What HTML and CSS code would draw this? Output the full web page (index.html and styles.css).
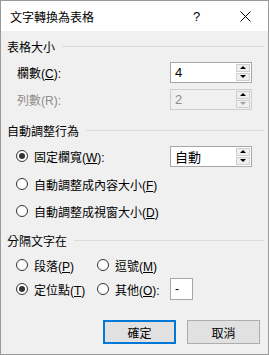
FILE: index.html
```
<!DOCTYPE html>
<html lang="zh-Hant">
<head>
    <meta charset="UTF-8">
    <meta name="viewport" content="width=device-width, initial-scale=1.0">
    <title>文字轉換為表格</title>
    <link rel="stylesheet" href="styles.css">
</head>
<body>
    <div class="dialog">
        <div class="titlebar">
            <span class="title">文字轉換為表格</span>
            <span class="help">?</span>
            <span class="close">
                <svg width="11" height="11" viewBox="0 0 11 11">
                    <path d="M0.5 0.5 L10.5 10.5 M10.5 0.5 L0.5 10.5" stroke="#000" stroke-width="1" fill="none"/>
                </svg>
            </span>
        </div>

        <div class="body">
            <div class="group-head mt5"><span>表格大小</span><span class="line"></span></div>

            <div class="field mt3">
                <label>欄數(<u>C</u>):</label>
                <div class="spin">
                    <span class="value">4</span>
                    <div class="spin-btns">
                        <span class="up"></span>
                        <span class="down"></span>
                    </div>
                </div>
            </div>

            <div class="field mt1 disabled">
                <label>列數(R):</label>
                <div class="spin">
                    <span class="value">2</span>
                    <div class="spin-btns">
                        <span class="up"></span>
                        <span class="down"></span>
                    </div>
                </div>
            </div>

            <div class="group-head mt8"><span>自動調整行為</span><span class="line"></span></div>

            <div class="field radio-field mt3">
                <label class="radio checked"><span class="dot"></span><span>固定欄寬(<u>W</u>):</span></label>
                <div class="spin">
                    <span class="value">自動</span>
                    <div class="spin-btns">
                        <span class="up"></span>
                        <span class="down"></span>
                    </div>
                </div>
            </div>

            <div class="radio-row mt2">
                <label class="radio"><span class="dot"></span><span>自動調整成內容大小(<u>F</u>)</span></label>
            </div>
            <div class="radio-row mt1">
                <label class="radio"><span class="dot"></span><span>自動調整成視窗大小(<u>D</u>)</span></label>
            </div>

            <div class="group-head mt6"><span>分隔文字在</span><span class="line"></span></div>

            <div class="sep-grid mt2">
                <label class="radio"><span class="dot"></span><span>段落(<u>P</u>)</span></label>
                <label class="radio"><span class="dot"></span><span>逗號(<u>M</u>)</span></label>
                <span></span>
            </div>
            <div class="sep-grid short">
                <label class="radio checked"><span class="dot"></span><span>定位點(<u>T</u>)</span></label>
                <label class="radio"><span class="dot"></span><span>其他(<u>O</u>):</span></label>
                <div class="other-box">-</div>
            </div>

            <div class="buttons">
                <button class="btn default">確定</button>
                <button class="btn">取消</button>
            </div>
        </div>
    </div>
</body>
</html>
```

FILE: styles.css
```
body {
    margin: 0;
    padding: 0;
    font-family: "Liberation Sans", "Noto Sans CJK TC", sans-serif;
    font-size: 12px;
    color: #000;
    background-color: #fff;
}

.dialog {
    width: 269px;
    height: 355px;
    box-sizing: border-box;
    border: 1px solid #9a9a9a;
    background-color: #f0f0f0;
    display: flex;
    flex-direction: column;
}

.titlebar {
    height: 30px;
    background-color: #fff;
    display: flex;
    align-items: center;
    padding-left: 9px;
    flex-shrink: 0;
}

.title {
    flex: 1;
    font-size: 12px;
}

.help {
    width: 12px;
    margin-right: 35px;
    font-size: 13px;
}

.close {
    display: flex;
    margin-right: 17px;
}

.body {
    padding: 0 4px 0 6px;
    display: flex;
    flex-direction: column;
}

.mt1 { margin-top: 1px; }
.mt2 { margin-top: 2px; }
.mt3 { margin-top: 3px; }
.mt5 { margin-top: 5px; }
.mt6 { margin-top: 6px; }
.mt8 { margin-top: 8px; }

.group-head {
    height: 20px;
    display: flex;
    align-items: center;
    gap: 7px;
}

.group-head .line {
    flex: 1;
    height: 1px;
    background-color: #dcdcdc;
}

.field {
    height: 26px;
    display: flex;
    align-items: center;
    justify-content: space-between;
    padding: 0 12px 0 10px;
}

.radio-field {
    padding-left: 9px;
}

.field.disabled label,
.field.disabled .value {
    color: #8d8d8d;
}

.spin {
    width: 82px;
    height: 21px;
    box-sizing: border-box;
    border: 1px solid #a6a6a6;
    background-color: #fff;
    display: flex;
    align-items: stretch;
}

.field.disabled .spin {
    background-color: #f0f0f0;
    border-color: #cfcfcf;
}

.spin .value {
    flex: 1;
    padding-left: 4px;
    display: flex;
    align-items: center;
    font-size: 13px;
}

.spin-btns {
    width: 14px;
    margin: 1px;
    display: flex;
    flex-direction: column;
    gap: 1px;
}

.spin-btns span {
    flex: 1;
    box-sizing: border-box;
    border: 1px solid #cfcfcf;
    background-color: #efefef;
    display: flex;
    align-items: center;
    justify-content: center;
}

.spin-btns .up::before {
    content: "";
    border-left: 3px solid transparent;
    border-right: 3px solid transparent;
    border-bottom: 3px solid #000;
}

.spin-btns .down::before {
    content: "";
    border-left: 3px solid transparent;
    border-right: 3px solid transparent;
    border-top: 3px solid #000;
}

.field.disabled .spin-btns .down::before {
    border-top-color: #a0a0a0;
}

.radio {
    display: flex;
    align-items: center;
    gap: 6px;
    white-space: nowrap;
}

.radio .dot {
    width: 12px;
    height: 12px;
    box-sizing: border-box;
    border: 1px solid #333;
    border-radius: 50%;
    background-color: #fff;
    display: flex;
    align-items: center;
    justify-content: center;
}

.radio.checked .dot::after {
    content: "";
    width: 6px;
    height: 6px;
    border-radius: 50%;
    background-color: #333;
}

.radio-row {
    height: 26px;
    display: flex;
    align-items: center;
    padding-left: 9px;
}

.sep-grid {
    height: 26px;
    display: grid;
    grid-template-columns: 81px 73px auto;
    align-items: center;
    padding-left: 9px;
}

.sep-grid.short {
    height: 22px;
}

.other-box {
    width: 23px;
    height: 22px;
    box-sizing: border-box;
    border: 1px solid #a6a6a6;
    background-color: #fff;
    padding-left: 4px;
    line-height: 20px;
}

.buttons {
    margin-top: 20px;
    display: flex;
    justify-content: flex-end;
    gap: 11px;
    padding-right: 4px;
}

.btn {
    width: 73px;
    height: 24px;
    box-sizing: border-box;
    border: 1px solid #adadad;
    background-color: #e1e1e1;
    font-family: "Liberation Sans", "Noto Sans CJK TC", sans-serif;
    font-size: 12px;
    color: #000;
    padding: 0;
}

.btn.default {
    border: 2px solid #0078d7;
}
```
